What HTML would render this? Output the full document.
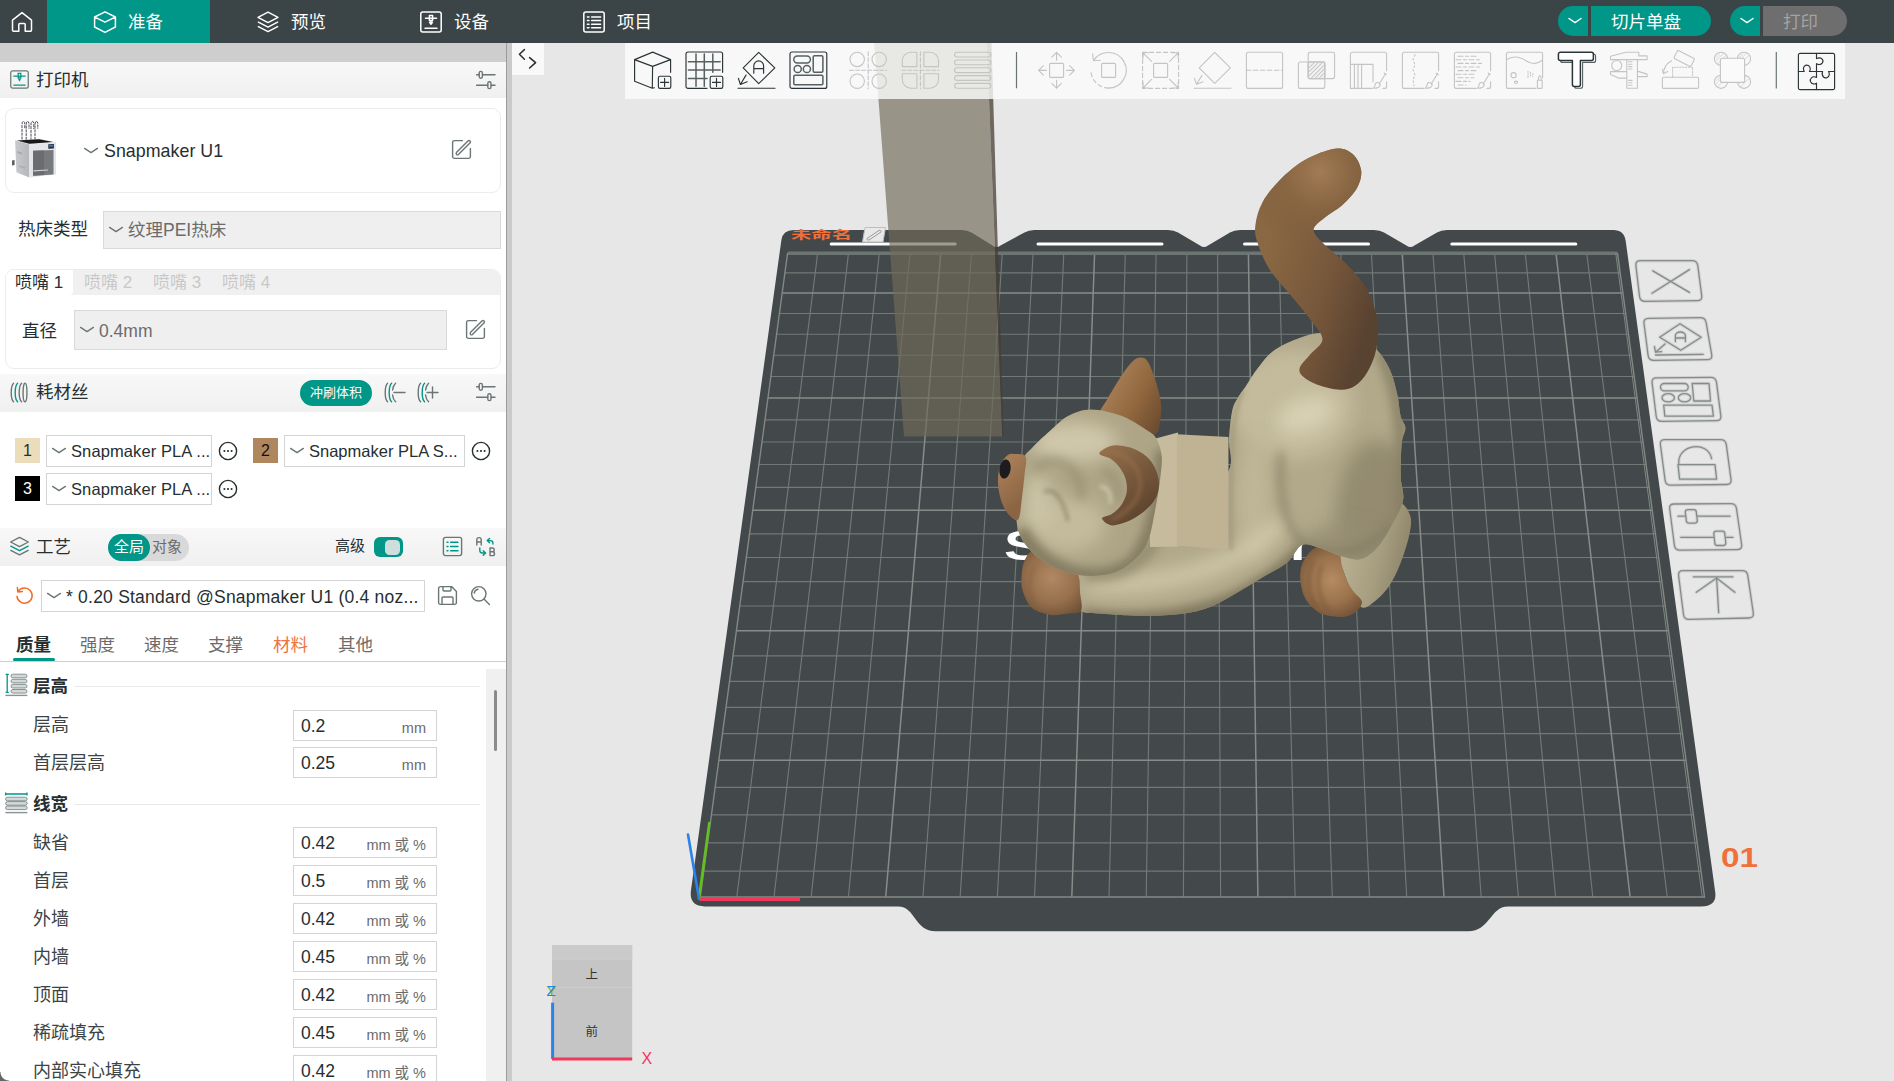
<!DOCTYPE html>
<html lang="zh-CN">
<head>
<meta charset="utf-8">
<title>Snapmaker Orca</title>
<style>
*{box-sizing:border-box}
html,body{margin:0;padding:0}
body{width:1894px;height:1081px;overflow:hidden;background:#e7e7e7;position:relative;
 font-family:"Liberation Sans","Noto Sans CJK SC",sans-serif;color:#262e30;font-size:17.5px}
.a{position:absolute}
.t{position:absolute;white-space:nowrap;line-height:20px;height:20px}
svg{position:absolute;overflow:visible}
.ic{fill:none;stroke:#6b7575;stroke-width:1.4;stroke-linecap:round;stroke-linejoin:round}
/* top bar */
#top{left:0;top:0;width:1894px;height:43px;background:#3b4446}
#top .tab{position:absolute;top:0;height:43px;width:163px}
#top .tab.on{background:#009688}
#top .tt{position:absolute;top:12px;left:81px;color:#fff;font-size:17.5px;line-height:20px;white-space:nowrap}
.wi{fill:none;stroke:#fff;stroke-width:1.5;stroke-linecap:round;stroke-linejoin:round}
/* left panel */
#left{left:0;top:0;width:506px;height:1081px;background:#fff;overflow:hidden}
.hdr{position:absolute;left:0;width:506px;background:linear-gradient(#f8f8f8,#f0f0f0)}
.card{position:absolute;border:1px solid #ececec;border-radius:9px;background:#fff}
.combo{position:absolute;background:#efefef;border:1px solid #d9d9d9}
.wcombo{position:absolute;background:#fff;border:1px solid #d4d4d4}
.gray{color:#6b6b6b}
.inp{position:absolute;left:293px;width:144px;height:31px;border:1px solid #d4d4d4;background:#fff}
.inp .v{position:absolute;left:7px;top:5px;line-height:20px;font-size:17.5px;color:#262e30}
.inp .u{position:absolute;right:10px;top:7px;line-height:20px;font-size:14.5px;color:#6b6b6b;white-space:nowrap}
.lbl{position:absolute;left:33px;line-height:20px;font-size:18px;color:#3c4446;white-space:nowrap}
.grp{position:absolute;left:33px;line-height:20px;font-size:17.5px;font-weight:bold;color:#262e30;white-space:nowrap}
</style>
</head>
<body>
<!-- ================= 3D VIEWPORT ================= -->
<svg style="left:0;top:0" width="1894" height="1081" viewBox="0 0 1894 1081">
<defs>
<radialGradient id="gHead" gradientUnits="userSpaceOnUse" cx="1082" cy="470" r="95" fx="1072" fy="452"><stop offset="0" stop-color="#d9d1b6"/><stop offset="0.45" stop-color="#cbc1a2"/><stop offset="0.8" stop-color="#aea486"/><stop offset="1" stop-color="#8f8669"/></radialGradient>
<radialGradient id="gBody" gradientUnits="userSpaceOnUse" cx="1318" cy="440" r="130" fx="1308" fy="418"><stop offset="0" stop-color="#dad2b6"/><stop offset="0.4" stop-color="#c8be9f"/><stop offset="0.8" stop-color="#a79e80"/><stop offset="1" stop-color="#8a8266"/></radialGradient>
<linearGradient id="gArm" gradientUnits="userSpaceOnUse" x1="1150" y1="540" x2="1170" y2="620"><stop offset="0" stop-color="#b8ae8e"/><stop offset="0.35" stop-color="#d5ccb0"/><stop offset="0.75" stop-color="#b5ab8b"/><stop offset="1" stop-color="#8e8568"/></linearGradient>
<linearGradient id="gLeg" gradientUnits="userSpaceOnUse" x1="1345" y1="560" x2="1410" y2="575"><stop offset="0" stop-color="#b7ad8f"/><stop offset="0.5" stop-color="#a69d80"/><stop offset="1" stop-color="#898166"/></linearGradient>
<linearGradient id="gTail" gradientUnits="userSpaceOnUse" x1="1262" y1="262" x2="1378" y2="300"><stop offset="0" stop-color="#8a6843"/><stop offset="0.55" stop-color="#77573b"/><stop offset="1" stop-color="#584230"/></linearGradient>
<radialGradient id="gTailTip" gradientUnits="userSpaceOnUse" cx="1320" cy="172" r="80"><stop offset="0" stop-color="#a17b53"/><stop offset="0.45" stop-color="#8a6743" stop-opacity="0.85"/><stop offset="1" stop-color="#7a5a3c" stop-opacity="0"/></radialGradient>
<linearGradient id="gEar" gradientUnits="userSpaceOnUse" x1="1105" y1="390" x2="1160" y2="420"><stop offset="0" stop-color="#a87e58"/><stop offset="0.5" stop-color="#93693f"/><stop offset="1" stop-color="#6f4e30"/></linearGradient>
<linearGradient id="gEar2" gradientUnits="userSpaceOnUse" x1="1105" y1="448" x2="1158" y2="512"><stop offset="0" stop-color="#93704c"/><stop offset="0.45" stop-color="#7a5a3d"/><stop offset="1" stop-color="#59412c"/></linearGradient>
<radialGradient id="gPaw" gradientUnits="userSpaceOnUse" cx="1052" cy="578" r="42"><stop offset="0" stop-color="#b08863"/><stop offset="0.6" stop-color="#966f4c"/><stop offset="1" stop-color="#6f5137"/></radialGradient>
<radialGradient id="gFoot" gradientUnits="userSpaceOnUse" cx="1332" cy="580" r="40"><stop offset="0" stop-color="#b48b62"/><stop offset="0.6" stop-color="#99714b"/><stop offset="1" stop-color="#735338"/></radialGradient>
<linearGradient id="gNose" gradientUnits="userSpaceOnUse" x1="1000" y1="470" x2="1026" y2="500"><stop offset="0" stop-color="#a67c56"/><stop offset="1" stop-color="#8a6443"/></linearGradient>
<filter id="b2" filterUnits="userSpaceOnUse" x="950" y="100" width="520" height="560"><feGaussianBlur stdDeviation="2.2"/></filter>
<filter id="b4" filterUnits="userSpaceOnUse" x="950" y="100" width="520" height="560"><feGaussianBlur stdDeviation="5"/></filter>
<filter id="b8" filterUnits="userSpaceOnUse" x="950" y="100" width="520" height="560"><feGaussianBlur stdDeviation="9"/></filter>
</defs>
<path d="M781.4 240 Q782.8 230 793.8 230 L961.5 230 Q967.5 230 971.5 232.5 L992.5 245.5 Q996.5 248.5 1000.5 245.5 L1024.5 232.5 Q1028.5 230 1034.5 230 L1168 230 Q1174 230 1178 232.5 L1200 245.5 Q1204 248.5 1208 245.5 L1230 232.5 Q1234 230 1240 230 L1374 230 Q1380 230 1384 232.5 L1406.4 245.5 Q1410.4 248.5 1414.4 245.5 L1437 232.5 Q1441 230 1447 230 L1613.2 230 Q1624.2 230 1625.7 241 L1715.2 892 Q1717.2 906.4 1701.2 906.4 L1508 906.4 C1490 906.4 1490 931.3 1468 931.3 L936 931.3 C914 931.3 916 906.4 898 906.4 L704.7 906.4 Q688.7 906.4 691 890 Z" fill="#43484a"/>
<path d="M784.9 272.9 H1620.2 M779.4 313.5 H1625.7 M776.6 334.2 H1628.5 M773.7 355.2 H1631.3 M770.9 376.5 H1634.2 M765 419.9 H1640 M762 442 H1643 M758.9 464.5 H1646.1 M755.8 487.3 H1649.1 M749.5 533.8 H1655.4 M746.3 557.5 H1658.6 M743.1 581.6 H1661.9 M739.7 606 H1665.2 M733 655.9 H1671.9 M729.5 681.4 H1675.4 M726 707.3 H1678.9 M722.4 733.6 H1682.4 M715.2 787.4 H1689.7 M711.4 814.9 H1693.4 M707.7 842.8 H1697.2 M703.8 871.1 H1701 M817.7 253 L736.8 897 M848.5 253 L774 897 M879.3 253 L811.2 897 M910 253 L848.4 897 M971.5 253 L922.9 897 M1002.3 253 L960.1 897 M1033.1 253 L997.3 897 M1063.8 253 L1034.5 897 M1125.3 253 L1109 897 M1156.1 253 L1146.2 897 M1186.9 253 L1183.4 897 M1217.6 253 L1220.6 897 M1279.1 253 L1295.1 897 M1309.9 253 L1332.3 897 M1340.7 253 L1369.5 897 M1371.4 253 L1406.7 897 M1432.9 253 L1481.2 897 M1463.7 253 L1518.4 897 M1494.5 253 L1555.6 897 M1525.2 253 L1592.8 897 M1586.7 253 L1667.3 897" fill="none" stroke="#727976" stroke-width="1.15"/>
<path d="M782.2 293.1 H1622.9 M767.9 398 H1637.1 M752.7 510.3 H1652.3 M736.4 630.8 H1668.5 M718.8 760.3 H1686 M940.8 253 L885.7 897 M1094.6 253 L1071.8 897 M1248.4 253 L1257.9 897 M1402.2 253 L1444 897 M1556 253 L1630.1 897" fill="none" stroke="#868d88" stroke-width="1.5"/>
<path d="M787.6 253.2 L1617.5 253.2" stroke="#6d7573" stroke-width="3.4" fill="none"/>
<path d="M787.6 253 L700.3 897 L1704.5 897 L1617.5 253" stroke="#828985" stroke-width="1.4" fill="none"/>
<path d="M1615.7 253 L1702.3 897" stroke="#7f8681" stroke-width="1" fill="none"/>
<rect x="829.7" y="242.6" width="127" height="3" rx="1.5" fill="#fff"/>
<rect x="1036.5" y="242.6" width="127" height="3" rx="1.5" fill="#fff"/>
<rect x="1243" y="242.6" width="127" height="3" rx="1.5" fill="#fff"/>
<rect x="1450.3" y="242.6" width="127" height="3" rx="1.5" fill="#fff"/>
<text x="791" y="240" font-size="17" font-weight="bold" fill="#f0703c" textLength="61" lengthAdjust="spacingAndGlyphs" transform="translate(0 82.800) scale(1 0.650)">未命名</text>
<g transform="translate(862 227)"><path d="M3 0.5 H23.500 L21 15 H0.500 Z" fill="#e9e9e9" stroke="#bdbdbd" stroke-width="1"/><path d="M5 11.500 L17 3.400 a1.500 1.200 0 0 1 2 1.600 L7 13 a1.500 1.200 0 0 1 -2 -1.500 Z" fill="none" stroke="#9a9a9a" stroke-width="1"/></g>
<text x="1004" y="559.5" font-size="43" font-weight="bold" fill="#fff" textLength="308" lengthAdjust="spacingAndGlyphs" font-family="Liberation Sans, sans-serif">Snapmaker</text>
<path d="M699.5 899.5 H800" stroke="#f0385a" stroke-width="3.2" fill="none"/>
<path d="M699 898.5 L709.3 823" stroke="#62c11c" stroke-width="2.6" stroke-linecap="round" fill="none"/>
<path d="M699 898.5 L688 834.500" stroke="#2a82ea" stroke-width="2.6" stroke-linecap="round" fill="none"/>
<text x="1721" y="867" font-size="27" font-weight="bold" fill="#f0703c" textLength="37" lengthAdjust="spacingAndGlyphs" font-family="Liberation Sans, sans-serif">01</text>
<path d="M874.2 43 L986.8 43 L1002.300 436.500 L904 436.500 Z" fill="rgba(112,106,88,0.665)"/>
<path d="M986.800 43 L991.500 43 L1003.600 436 L1002.300 436.500 Z" fill="rgba(70,62,52,0.750)"/>
<g id="cat">
<path d="M1338 550 C1339.2 544.2 1343 539.2 1350 535 C1357 530.8 1372 530.3 1380 525 C1388 519.7 1393 504.7 1398 503 C1403 501.3 1408.1 509.8 1410 515 C1411.9 520.2 1411.1 526 1409.5 534 C1407.9 542 1404.1 554.2 1400.6 563 C1397.1 571.8 1393.3 580.2 1388.5 587 C1383.7 593.8 1376.3 600.4 1371.7 603.7 C1367.1 607 1364.3 609 1361 607 C1357.7 605 1355 598.2 1352 592 C1349 585.8 1345.3 577 1343 570 C1340.7 563 1336.8 555.8 1338 550 Z" fill="url(#gLeg)"/>
<path d="M1314 548.4 C1309.8 550.9 1305.3 557.1 1303 562 C1300.7 566.9 1300 572.2 1300.2 578 C1300.4 583.8 1302.2 591.5 1304.3 596.5 C1306.4 601.5 1309.8 605 1313 608 C1316.2 611 1318.6 613 1323.6 614.5 C1328.6 616 1337.6 617.3 1342.8 617 C1348 616.7 1351.8 615 1355 612.5 C1358.2 610 1362.2 605.4 1362 602 C1361.8 598.6 1356.4 595.3 1354 592 C1351.6 588.7 1349.6 586.3 1347.6 582 C1345.6 577.7 1343.4 570.8 1342 566 C1340.6 561.2 1341.5 556.2 1339.2 553 C1336.9 549.8 1332.2 547.8 1328 547 C1323.8 546.2 1318.2 545.9 1314 548.4 Z" fill="url(#gFoot)"/>
<path d="M1313 562 C1306 578 1308 596 1318 608 M1322 566 C1316 580 1318 598 1328 610" fill="none" stroke="#6f4e33" stroke-width="2.400" opacity="0.600" filter="url(#b2)"/>
<clipPath id="cBody"><path d="M1245.4 387 C1242 392.1 1239.7 394.4 1237.5 398.5 C1235.3 402.6 1233.6 404.4 1232.2 411.3 C1230.8 418.2 1229.5 430.2 1229 440 C1228.5 449.8 1233.8 460 1229 470 C1224.2 480 1213.2 491.7 1200 500 C1186.8 508.3 1165 511.7 1150 520 C1135 528.3 1121.8 541.2 1110 550 C1098.2 558.8 1084.1 566 1079 573 C1073.9 580 1079.2 585.7 1079.5 592 C1079.8 598.3 1077.6 607.1 1081 610.7 C1084.4 614.3 1093.8 612.8 1100 613.5 C1106.2 614.2 1109.6 614.5 1118.3 614.9 C1127 615.3 1140.8 616 1152 615.7 C1163.2 615.4 1175.9 614.8 1185.8 613.2 C1195.7 611.7 1202.8 609.8 1211.2 606.4 C1219.7 603 1228 597.7 1236.5 592.9 C1245 588.1 1253.5 582.8 1261.9 577.7 C1270.4 572.6 1280.5 568 1287.2 562.5 C1293.9 557 1296.5 547.4 1302 545 C1307.5 542.6 1313.8 546.2 1320 548 C1326.2 549.8 1332.4 553.7 1339 555.6 C1345.6 557.5 1353.5 560.4 1359.7 559.2 C1366 558 1371.1 554.1 1376.5 548.4 C1381.9 542.7 1387.6 533 1392 525 C1396.4 517 1401.6 508.4 1403 500.3 C1404.4 492.2 1400.8 485.8 1400.6 476.2 C1400.4 466.6 1401 450.5 1401.8 442.5 C1402.6 434.5 1405.6 432.4 1405.4 428 C1405.2 423.6 1401.9 421.6 1400.6 416 C1399.2 410.4 1399.1 402.4 1397.3 394.7 C1395.5 387 1393.5 377.6 1390 370 C1386.5 362.4 1381.8 354.5 1376 349 C1370.2 343.5 1362.7 339.8 1355 337 C1347.3 334.2 1338.3 332.7 1330 332.5 C1321.7 332.3 1314.2 333.1 1305 336 C1295.8 338.9 1282.8 344.5 1275 349.8 C1267.2 355.1 1262.9 361.8 1258 368 C1253.1 374.2 1248.8 381.9 1245.4 387 Z"/></clipPath>
<g clip-path="url(#cBody)">
<rect x="1060" y="320" width="360" height="310" fill="#b2a98b"/>
<ellipse cx="1292" cy="405" rx="62" ry="55" fill="#c5bc9d" filter="url(#b8)" opacity="0.95"/>
<ellipse cx="1306" cy="415" rx="30" ry="17" fill="#dad2b6" filter="url(#b8)" opacity="0.95" transform="rotate(-20 1306 415)"/>
<ellipse cx="1254" cy="500" rx="17" ry="62" fill="#c1b89a" filter="url(#b8)" opacity="0.9"/>
<ellipse cx="1378" cy="515" rx="42" ry="75" fill="#8f876c" filter="url(#b8)" opacity="0.85"/>
<ellipse cx="1345" cy="545" rx="44" ry="20" fill="#958d72" filter="url(#b8)" opacity="0.85"/>
<path d="M1085 582 C1130 588 1190 580 1235 557 C1258 544 1272 533 1282 521" fill="none" stroke="#d3caac" stroke-width="17" filter="url(#b8)" opacity="0.95"/>
<path d="M1082 617 C1130 623 1190 621 1240 597 C1270 581 1290 567 1304 549" fill="none" stroke="#7d755b" stroke-width="17" filter="url(#b4)" opacity="0.9"/>
<path d="M1085 575 C1120 580 1150 560 1165 520" fill="none" stroke="#8e866a" stroke-width="14" filter="url(#b4)" opacity="0.7"/>
<path d="M1281 452 C1278 490 1283 520 1300 541 C1325 557 1365 559 1392 524" fill="none" stroke="#78715a" stroke-width="5" filter="url(#b4)" opacity="0.7"/>
<path d="M1380 350 C1402 390 1404 440 1402 520" fill="none" stroke="#847c62" stroke-width="14" filter="url(#b4)" opacity="0.75"/>
<path d="M1243 390 C1232 410 1230 440 1231 550" fill="none" stroke="#9a9176" stroke-width="5" filter="url(#b2)" opacity="0.5"/>
</g>
<path d="M1334.9 148.7 C1342.8 147.6 1347.9 150.1 1352.3 153.7 C1356.7 157.2 1360.3 164.4 1361.1 170 C1361.9 175.6 1360.4 181.6 1357.3 187.4 C1354.2 193.2 1347.8 199.9 1342.4 204.9 C1337 209.9 1329.7 213.2 1324.9 217.4 C1320.1 221.6 1313.6 225.3 1313.6 229.9 C1313.6 234.5 1319.3 239.1 1324.9 244.9 C1330.5 250.7 1340.3 257.4 1347.4 264.9 C1354.5 272.4 1362.3 280.6 1367.3 289.8 C1372.3 299 1375.8 309.8 1377.3 319.8 C1378.8 329.8 1377.8 341.1 1376.1 349.8 C1374.4 358.6 1370.8 366.3 1367.3 372.3 C1363.8 378.3 1359.4 383.1 1354.8 386 C1350.2 388.9 1346.1 389.9 1339.9 389.7 C1333.7 389.5 1323.7 387 1317.4 384.7 C1311.2 382.4 1305.3 378.9 1302.4 376 C1299.5 373.1 1298.7 370.8 1299.9 367.3 C1301.2 363.8 1306.2 359.4 1309.9 354.8 C1313.7 350.2 1322 345.2 1322.4 339.8 C1322.8 334.4 1317.4 329.4 1312.4 322.3 C1307.4 315.2 1299.5 306 1292.4 297.3 C1285.3 288.6 1275.7 279 1269.9 269.9 C1264.1 260.8 1259.8 249.9 1257.4 242.4 C1255 234.9 1254.6 231.6 1255.4 224.9 C1256.2 218.2 1258.3 209.9 1262.4 202.4 C1266.5 194.9 1272.8 187.1 1279.9 180 C1287 172.9 1295.7 165.2 1304.9 160 C1314.1 154.8 1327 149.8 1334.9 148.7 Z" fill="url(#gTail)"/>
<path d="M1334.9 148.7 C1342.8 147.6 1347.9 150.1 1352.3 153.7 C1356.7 157.2 1360.3 164.4 1361.1 170 C1361.9 175.6 1360.4 181.6 1357.3 187.4 C1354.2 193.2 1347.8 199.9 1342.4 204.9 C1337 209.9 1329.7 213.2 1324.9 217.4 C1320.1 221.6 1313.6 225.3 1313.6 229.9 C1313.6 234.5 1319.3 239.1 1324.9 244.9 C1330.5 250.7 1340.3 257.4 1347.4 264.9 C1354.5 272.4 1362.3 280.6 1367.3 289.8 C1372.3 299 1375.8 309.8 1377.3 319.8 C1378.8 329.8 1377.8 341.1 1376.1 349.8 C1374.4 358.6 1370.8 366.3 1367.3 372.3 C1363.8 378.3 1359.4 383.1 1354.8 386 C1350.2 388.9 1346.1 389.9 1339.9 389.7 C1333.7 389.5 1323.7 387 1317.4 384.7 C1311.2 382.4 1305.3 378.9 1302.4 376 C1299.5 373.1 1298.7 370.8 1299.9 367.3 C1301.2 363.8 1306.2 359.4 1309.9 354.8 C1313.7 350.2 1322 345.2 1322.4 339.8 C1322.8 334.4 1317.4 329.4 1312.4 322.3 C1307.4 315.2 1299.5 306 1292.4 297.3 C1285.3 288.6 1275.7 279 1269.9 269.9 C1264.1 260.8 1259.8 249.9 1257.4 242.4 C1255 234.9 1254.6 231.6 1255.4 224.9 C1256.2 218.2 1258.3 209.9 1262.4 202.4 C1266.5 194.9 1272.8 187.1 1279.9 180 C1287 172.9 1295.7 165.2 1304.9 160 C1314.1 154.8 1327 149.8 1334.9 148.7 Z" fill="url(#gTailTip)"/>
<path d="M1150 440 L1178 432.500 L1178 546.500 L1150 547 Z" fill="#c6bc9d"/>
<path d="M1177 434.300 L1228.500 437 L1228.200 549.800 L1176.600 545.600 Z" fill="#bfb393"/>
<path d="M1032.1 550.7 C1027.8 553 1025.8 557.6 1024 562 C1022.2 566.4 1021.7 572.1 1021.5 577 C1021.3 581.9 1021 586 1022.8 591.2 C1024.6 596.4 1027.4 604.2 1032.1 608.1 C1036.8 612 1044.7 614 1050.7 614.9 C1056.7 615.8 1062.9 614.2 1068 613.5 C1073.1 612.8 1079.1 614.3 1081.1 610.7 C1083.1 607.1 1080.4 597.8 1080 592 C1079.6 586.2 1080.3 581.3 1078.6 576 C1076.9 570.7 1074.8 564.7 1070 560 C1065.2 555.3 1056.3 549.5 1050 548 C1043.7 546.5 1036.4 548.4 1032.1 550.7 Z" fill="url(#gPaw)"/>
<path d="M1036 566 C1028 576 1028 590 1034 600" fill="none" stroke="#77553a" stroke-width="2" opacity="0.5" filter="url(#b2)"/>
<path d="M1141 357.5 C1143.5 357.7 1145.5 357.9 1148 362 C1150.5 366.1 1153.8 375 1156 382 C1158.2 389 1160.3 397.3 1161 404 C1161.7 410.7 1161 416.9 1160 422 C1159 427.1 1159 432.6 1154.8 434.3 C1150.6 436 1142.1 433.7 1135 432 C1127.9 430.3 1118 426.8 1112 424 C1106 421.2 1100 419.3 1099.3 415 C1098.6 410.7 1104.2 404.7 1108 398 C1111.8 391.3 1117.8 381.2 1122 375 C1126.2 368.8 1129.8 363.9 1133 361 C1136.2 358.1 1138.5 357.3 1141 357.5 Z" fill="url(#gEar)"/>
<clipPath id="cHead"><path d="M1091 409.4 C1082 409.4 1074.9 412.3 1068 416 C1061.1 419.7 1055.4 426.3 1049.4 431.6 C1043.4 436.9 1036.2 443.6 1032 448 C1027.8 452.4 1025.7 452.7 1024 458 C1022.3 463.3 1023 472.2 1022 480 C1021 487.8 1018.9 497.7 1018 505 C1017.1 512.3 1015.9 517.5 1016.9 523.7 C1017.9 529.9 1019.5 536 1023.7 542.2 C1027.9 548.4 1034.9 555.7 1042.2 560.8 C1049.5 565.9 1059.1 570.1 1067.6 572.6 C1076 575.1 1084.5 576.3 1092.9 576 C1101.4 575.7 1110.7 574.4 1118.3 571 C1125.9 567.6 1133.4 561.1 1138.5 555.8 C1143.6 550.4 1145.9 546.8 1148.7 538.9 C1151.5 531 1153.5 518.2 1155.4 508.4 C1157.3 498.6 1159 488.6 1160 480 C1161 471.4 1162.2 463.2 1161.7 456.5 C1161.2 449.8 1159.1 444.1 1157 440 C1154.9 435.9 1154.8 435.6 1149 431.6 C1143.2 427.6 1131.7 419.7 1122 416 C1112.3 412.3 1100 409.4 1091 409.4 Z"/></clipPath>
<g clip-path="url(#cHead)">
<rect x="1000" y="400" width="170" height="185" fill="#aea587"/>
<ellipse cx="1074" cy="442" rx="44" ry="20" fill="#d0c8ab" filter="url(#b8)"/>
<ellipse cx="1066" cy="524" rx="40" ry="28" fill="#c4bb9d" filter="url(#b8)"/>
<ellipse cx="1038" cy="500" rx="14" ry="28" fill="#cfc7aa" filter="url(#b8)" opacity="0.9"/>
<path d="M1036 470 C1046 458 1062 458 1074 472 C1080 480 1082 492 1080 500" fill="none" stroke="#8f876b" stroke-width="9" opacity="0.55" filter="url(#b4)"/>
<path d="M1044 492 C1050 489 1056 491 1062 503 C1066 511 1067 517 1068 521" fill="none" stroke="#746d54" stroke-width="2.400" opacity="0.700" filter="url(#b2)"/>
<path d="M1102 470 C1114 474 1122 486 1118 500" fill="none" stroke="#8b8367" stroke-width="6" opacity="0.600" filter="url(#b4)"/>
<path d="M1100 486 C1108 488 1112 494 1110 504" fill="none" stroke="#e0d9c0" stroke-width="3" opacity="0.700" filter="url(#b2)"/>
<path d="M1020 530 C1040 570 1090 590 1130 566 C1152 548 1162 500 1164 450" fill="none" stroke="#7f775d" stroke-width="17" opacity="0.850" filter="url(#b4)"/>
</g>
<path d="M1007.7 455 C1010.4 453 1013 453.7 1016 454 C1019 454.3 1024.4 453.5 1025.8 457 C1027.2 460.5 1025.1 468.3 1024.5 475 C1023.9 481.7 1023 489.7 1022 497 C1021 504.3 1020.5 515.8 1018.5 519 C1016.5 522.2 1012.8 518.7 1010 516 C1007.2 513.3 1004 508.3 1002 503 C1000 497.7 998.3 490.2 998 484 C997.7 477.8 998.4 470.8 1000 466 C1001.6 461.2 1005 457 1007.7 455 Z" fill="url(#gNose)"/>
<ellipse cx="1005" cy="469" rx="5.600" ry="9.600" fill="#1c1c1e" transform="rotate(8 1005 469)"/>
<path d="M1099.3 453.8 C1098.8 451.8 1104.8 448.4 1108 447 C1111.2 445.6 1114.5 445.1 1118.7 445.4 C1122.9 445.6 1128.4 446.6 1133 448.5 C1137.6 450.4 1142.8 453.2 1146.5 456.5 C1150.2 459.8 1152.9 463.4 1155 468 C1157.1 472.6 1159.2 478.8 1159 484.3 C1158.8 489.8 1157.9 495.4 1154 501 C1150.1 506.6 1142.2 513.5 1135.4 517.6 C1128.6 521.7 1118.8 525.2 1113.2 525.4 C1107.6 525.5 1102.2 520.4 1102 518.5 C1101.8 516.6 1108.8 516.2 1112 514 C1115.2 511.8 1118.6 509 1121 505.5 C1123.4 502 1125.7 497.3 1126.5 493 C1127.3 488.7 1126.9 483.7 1125.8 479.5 C1124.7 475.3 1122.5 471.4 1120 468 C1117.5 464.6 1114.5 461.4 1111 459 C1107.5 456.6 1099.8 455.8 1099.3 453.8 Z" fill="url(#gEar2)"/>
<path d="M1104 452 C1120 450 1136 460 1140 480 C1142 495 1132 510 1112 520" fill="none" stroke="#9c7550" stroke-width="3" opacity="0.600" filter="url(#b2)"/>
</g>
</svg>
<svg style="left:0;top:0" width="1894" height="1081" viewBox="0 0 1894 1081">
<style>.ph{fill:none;stroke:#d3d3d3;stroke-width:3.400;stroke-linejoin:round;stroke-linecap:round}.pl{fill:none;stroke:#858b8b;stroke-width:1.300;stroke-linejoin:round;stroke-linecap:round}</style>
<path class="ph" d="M1635.9 265.7 Q1635.3 260.7 1640.3 260.7 L1692.1 260.7 Q1697.1 260.7 1697.8 265.7 L1701.7 295.6 Q1702.4 300.6 1697.4 300.7 L1645.1 301.3 Q1640.1 301.4 1639.5 296.4 Z"/>
<path class="pl" d="M1635.9 265.7 Q1635.3 260.7 1640.3 260.7 L1692.1 260.7 Q1697.1 260.7 1697.8 265.7 L1701.7 295.6 Q1702.4 300.6 1697.4 300.7 L1645.1 301.3 Q1640.1 301.4 1639.5 296.4 Z"/>
<path class="ph" d="M1652.800 270.900 L1689.400 292.400 M1689.400 269.600 L1652 293.200"/>
<path class="pl" d="M1652.800 270.900 L1689.400 292.400 M1689.400 269.600 L1652 293.200"/>
<path class="ph" d="M1644.0 323.5 Q1643.4 318.5 1648.4 318.4 L1700.2 317.7 Q1705.2 317.6 1706.1 322.5 L1711.7 354.6 Q1712.6 359.5 1707.6 359.6 L1653.7 360.3 Q1648.7 360.4 1648.1 355.4 Z"/>
<path class="pl" d="M1644.0 323.5 Q1643.4 318.5 1648.4 318.4 L1700.2 317.7 Q1705.2 317.6 1706.1 322.5 L1711.7 354.6 Q1712.6 359.5 1707.6 359.6 L1653.7 360.3 Q1648.7 360.4 1648.1 355.4 Z"/>
<path class="ph" d="M1680 323.700 L1701.200 337.200 L1680.800 350.200 L1659.700 337.200 Z M1655.600 355 L1703.200 354.300 M1665 344 L1655.600 352.200 M1654.400 346.600 L1655.600 352.200 L1661.600 351.600 M1675.400 341.600 V335.600 a5 3.600 0 0 1 10 0 V341.600 M1675.400 338 H1685.400"/>
<path class="pl" d="M1680 323.700 L1701.200 337.200 L1680.800 350.200 L1659.700 337.200 Z M1655.600 355 L1703.200 354.300 M1665 344 L1655.600 352.200 M1654.400 346.600 L1655.600 352.200 L1661.600 351.600 M1675.400 341.600 V335.600 a5 3.600 0 0 1 10 0 V341.600 M1675.400 338 H1685.400"/>
<path class="ph" d="M1652.1 382.9 Q1651.5 377.9 1656.5 377.9 L1710.8 377.4 Q1715.8 377.4 1716.5 382.4 L1720.8 415.6 Q1721.5 420.6 1716.5 420.7 L1661.8 421.3 Q1656.8 421.4 1656.2 416.4 Z"/>
<path class="pl" d="M1652.1 382.9 Q1651.5 377.9 1656.5 377.9 L1710.8 377.4 Q1715.8 377.4 1716.5 382.4 L1720.8 415.6 Q1721.5 420.6 1716.5 420.7 L1661.8 421.3 Q1656.8 421.4 1656.2 416.4 Z"/>
<path class="ph" d="M1664.200 383.500 H1684.500 a3.700 3.700 0 0 1 0 7.400 H1664.200 a3.700 3.700 0 0 1 0 -7.400 Z M1692.200 383.500 H1709 L1710.500 401 H1693.800 Z M1663.700 405.100 H1712 L1713.400 416.100 H1664.800 Z"/>
<path class="pl" d="M1664.200 383.500 H1684.500 a3.700 3.700 0 0 1 0 7.400 H1664.200 a3.700 3.700 0 0 1 0 -7.400 Z M1692.200 383.500 H1709 L1710.500 401 H1693.800 Z M1663.700 405.100 H1712 L1713.400 416.100 H1664.800 Z"/>
<path class="ph" d="M1674.400 397.800 a6.200 4.100 0 1 0 -12.400 0 a6.200 4.100 0 1 0 12.400 0 Z M1690.700 397.800 a6.200 4.100 0 1 0 -12.400 0 a6.200 4.100 0 1 0 12.400 0 Z"/>
<path class="pl" d="M1674.400 397.800 a6.200 4.100 0 1 0 -12.400 0 a6.200 4.100 0 1 0 12.400 0 Z M1690.700 397.800 a6.200 4.100 0 1 0 -12.400 0 a6.200 4.100 0 1 0 12.400 0 Z"/>
<path class="ph" d="M1660.4 444.7 Q1659.7 439.7 1664.7 439.7 L1720.6 439.7 Q1725.6 439.7 1726.3 444.7 L1731.0 479.4 Q1731.7 484.4 1726.7 484.5 L1670.8 485.2 Q1665.8 485.3 1665.1 480.3 Z"/>
<path class="pl" d="M1660.4 444.7 Q1659.7 439.7 1664.7 439.7 L1720.6 439.7 Q1725.6 439.7 1726.3 444.7 L1731.0 479.4 Q1731.7 484.4 1726.7 484.5 L1670.8 485.2 Q1665.8 485.3 1665.1 480.3 Z"/>
<path class="ph" d="M1678 464.600 H1715 L1716.600 479.200 H1679.600 Z M1678.800 464 C1677 444 1708 440 1711.600 458.600"/>
<path class="pl" d="M1678 464.600 H1715 L1716.600 479.200 H1679.600 Z M1678.800 464 C1677 444 1708 440 1711.600 458.600"/>
<path class="ph" d="M1669.7 509.0 Q1669.0 504.0 1674.0 504.0 L1730.8 503.6 Q1735.8 503.6 1736.5 508.6 L1741.6 544.5 Q1742.3 549.5 1737.3 549.6 L1680.1 550.2 Q1675.1 550.3 1674.4 545.3 Z"/>
<path class="pl" d="M1669.7 509.0 Q1669.0 504.0 1674.0 504.0 L1730.8 503.6 Q1735.8 503.6 1736.5 508.6 L1741.6 544.5 Q1742.3 549.5 1737.3 549.6 L1680.1 550.2 Q1675.1 550.3 1674.4 545.3 Z"/>
<path class="ph" d="M1678 516.200 H1685.300 M1697.500 516.200 H1730 M1680.800 537.300 H1713.800 M1726 537.300 H1732.900 M1687.800 509.700 h6 a2.500 2.500 0 0 1 2.500 2.500 l1 8.400 a2.500 2.500 0 0 1 -2.500 2.500 h-6 a2.500 2.500 0 0 1 -2.500 -2.500 l-1 -8.400 a2.500 2.500 0 0 1 2.500 -2.500 Z M1716.300 531.200 h6 a2.500 2.500 0 0 1 2.500 2.500 l1 9.300 a2.500 2.500 0 0 1 -2.500 2.500 h-6 a2.500 2.500 0 0 1 -2.500 -2.500 l-1 -9.300 a2.500 2.500 0 0 1 2.500 -2.500 Z"/>
<path class="pl" d="M1678 516.200 H1685.300 M1697.500 516.200 H1730 M1680.800 537.300 H1713.800 M1726 537.300 H1732.900 M1687.800 509.700 h6 a2.500 2.500 0 0 1 2.500 2.500 l1 8.400 a2.500 2.500 0 0 1 -2.500 2.500 h-6 a2.500 2.500 0 0 1 -2.500 -2.500 l-1 -8.400 a2.500 2.500 0 0 1 2.500 -2.500 Z M1716.300 531.200 h6 a2.500 2.500 0 0 1 2.500 2.500 l1 9.300 a2.500 2.500 0 0 1 -2.500 2.500 h-6 a2.500 2.500 0 0 1 -2.500 -2.500 l-1 -9.300 a2.500 2.500 0 0 1 2.500 -2.500 Z"/>
<path class="ph" d="M1678.6 575.7 Q1678.0 570.7 1683.0 570.7 L1742.1 570.7 Q1747.1 570.7 1747.8 575.6 L1753.3 613.0 Q1754.0 617.9 1749.0 618.0 L1689.1 619.4 Q1684.1 619.5 1683.5 614.5 Z"/>
<path class="pl" d="M1678.6 575.7 Q1678.0 570.7 1683.0 570.7 L1742.1 570.7 Q1747.1 570.7 1747.8 575.6 L1753.3 613.0 Q1754.0 617.9 1749.0 618.0 L1689.1 619.4 Q1684.1 619.5 1683.5 614.5 Z"/>
<path class="ph" d="M1693.400 576.800 H1732.900 M1716.600 578 L1718.700 612.600 M1696.300 592.300 L1716.600 578 L1734.900 592.300"/>
<path class="pl" d="M1693.400 576.800 H1732.900 M1716.600 578 L1718.700 612.600 M1696.300 592.300 L1716.600 578 L1734.900 592.300"/>
<rect x="552" y="945" width="80.200" height="113.400" fill="#c5c5c5"/>
<rect x="552" y="945" width="80.200" height="14.600" fill="#cacaca"/>
<path d="M552 959.600 H632.200 M552 987.400 H632.200" stroke="#cdcdcd" stroke-width="1"/>
<text x="591.800" y="979" font-size="12.500" fill="#333" text-anchor="middle">上</text>
<text x="591.800" y="1035.500" font-size="12.500" fill="#333" text-anchor="middle">前</text>
<path d="M552.600 1002.700 V1059" stroke="#2a82ea" stroke-width="3"/>
<path d="M552 1059 H632.200" stroke="#f0385a" stroke-width="3"/>
<text x="546.500" y="996" font-size="15" fill="#62c11c" font-family="Liberation Sans, sans-serif">Y</text>
<text x="546.500" y="996" font-size="15" fill="#2a82ea" font-family="Liberation Sans, sans-serif">Z</text>
<text x="641.500" y="1064" font-size="16" fill="#f0385a" font-family="Liberation Sans, sans-serif">X</text>
</svg>
<!-- ================= VIEWPORT OVERLAYS ================= -->
<div class="a" style="left:512px;top:43px;width:32px;height:32px;background:#f9f9f9"></div>
<svg style="left:517px;top:47.500px" width="22" height="22" viewBox="0 0 22 22"><path d="M7.400 1.600 L2.400 6.200 L7.400 11.200 M12.600 9.600 L18.600 14.600 L12.600 20" fill="none" stroke="#262e30" stroke-width="1.500" stroke-linecap="round" stroke-linejoin="round"/></svg>
<div class="a" style="left:625px;top:43px;width:1220px;height:56px;background:rgba(252,252,252,0.8)"></div>
<svg style="left:0;top:0" width="1894" height="110" viewBox="0 0 1894 110">
<style>.d{fill:none;stroke:#2b3436;stroke-width:1.15;stroke-linecap:round;stroke-linejoin:round}.g{fill:none;stroke:#c4c4c4;stroke-width:1.100;stroke-linecap:round;stroke-linejoin:round}.m{fill:none;stroke:#566062;stroke-width:1.500;stroke-linecap:round;stroke-linejoin:round}</style>
<g transform="translate(634 51.8)"><path class="d" d="M18.700 0.300 L0.600 7.800 L18.600 14.600 L36.600 7.800 Z M0.600 7.800 V29.400 L18.300 36.400 L20.400 36 M18.600 14.600 L18.300 36.400 M36.600 7.800 V20.500"/><rect class="d" x="24.400" y="24.400" width="12.400" height="12.200" rx="1.600"/><path class="d" d="M30.600 26.600 V34.600 M26.600 30.600 H34.600"/></g>
<g transform="translate(686 51.8)"><path class="d" d="M21 36.600 H2 a2 2 0 0 1 -2 -2 V2.200 a2 2 0 0 1 2 -2 H34.600 a2 2 0 0 1 2 2 V20.500"/><path class="m" d="M10 2.200 V34.400 M18.300 2.200 V34.400 M26.800 2.200 V20.500 M2.400 10 H34.200 M2.400 18.300 H34.200 M2.400 26.800 H21"/><rect class="d" x="24.200" y="24.400" width="12.600" height="12.200" rx="1.600"/><path class="d" d="M30.500 26.600 V34.600 M26.500 30.600 H34.500"/></g>
<g transform="translate(738 51.8)"><path class="d" d="M20.700 0.600 L36.800 16.100 L20.700 31.900 L5.200 16.100 Z M0 36.400 H37 M8 23.300 L2.400 32.700 M0.400 26.600 L2.400 32.700 L9.100 29.900"/><path class="d" d="M15.800 21.400 V14 a4.900 4.900 0 0 1 9.800 0 V21.400 M15.800 16.800 H25.600"/></g>
<g transform="translate(790 51.8)"><rect class="d" x="0" y="0.200" width="36.800" height="36.400" rx="2"/><rect class="m" x="3.800" y="4.200" width="16.600" height="6.900" rx="3.450"/><rect class="m" x="23.200" y="3.900" width="9.700" height="16.600" rx="1.200"/><circle class="m" cx="7.700" cy="17.200" r="3.600"/><circle class="m" cx="16.900" cy="17.200" r="3.600"/><rect class="m" x="3.800" y="23.500" width="29.100" height="9.500" rx="1.200"/></g>
<g transform="translate(849.6 51.8)"><circle class="g" cx="7.600" cy="7.600" r="7.200"/><circle class="g" cx="29.600" cy="7.600" r="7.200"/><circle class="g" cx="7.600" cy="29.400" r="7.200"/><circle class="g" cx="29.600" cy="29.400" r="7.200"/><path class="g" stroke-dasharray="4 2" d="M18.600 0 V37 M0 18.500 H37"/></g>
<g transform="translate(901.9 51.8)"><path class="g" d="M15 0.400 V14.800 H0.400 V9 A8.600 8.600 0 0 1 9 0.400 Z M22 0.400 H28 A8.600 8.600 0 0 1 36.600 9 V14.800 H22 Z M0.400 22 H15 V36.400 H9 A8.600 8.600 0 0 1 0.400 27.800 Z M22 22 H36.600 V27.800 A8.600 8.600 0 0 1 28 36.400 H22 Z"/><path class="g" stroke-dasharray="4 2" d="M18.500 0 V37 M0 18.500 H37"/></g>
<g transform="translate(954.2 51.8)"><rect class="g" x="0.400" y="0.4" width="36.200" height="4.800" rx="2.400"/><rect class="g" x="0.400" y="8.2" width="36.200" height="4.800" rx="2.400"/><rect class="g" x="0.400" y="16" width="36.200" height="4.800" rx="2.400"/><rect class="g" x="0.400" y="23.8" width="36.200" height="4.800" rx="2.400"/><rect class="g" x="0.400" y="31.6" width="36.200" height="4.800" rx="2.400"/></g>
<path d="M1016.500 52 V88.300" stroke="#6b7575" stroke-width="1.200"/>
<g transform="translate(1038 51.8)"><rect class="g" x="11.600" y="11.600" width="14" height="14" rx="1"/><path class="g" d="M18.600 8.400 V0.600 M13.800 5.400 L18.600 0.600 L23.400 5.400 M18.600 28.600 V36.400 M13.800 31.600 L18.600 36.400 L23.400 31.600 M8.400 18.600 H0.600 M5.400 13.800 L0.600 18.600 L5.400 23.400 M28.600 18.600 H36.400 M31.600 13.800 L36.400 18.600 L31.600 23.400"/></g>
<g transform="translate(1090 51.8)"><rect class="g" x="11.600" y="11.600" width="14" height="14" rx="1"/><path class="g" d="M3.600 8.600 A17.800 17.800 0 1 1 18.500 36.300"/><path class="g" stroke-dasharray="4 3" d="M18.500 36.300 A17.800 17.800 0 0 1 1 20"/><path class="g" d="M2.600 2 L3.400 9 L10.400 8.400"/></g>
<g transform="translate(1142 51.8)"><rect class="g" x="11.600" y="11.600" width="14" height="14" rx="1"/><rect class="g" x="0.600" y="0.600" width="36" height="36" stroke-dasharray="4 3"/><path class="g" d="M9.600 9.600 L1 1 M1 6.600 V1 H6.600 M27.600 9.600 L36.200 1 M30.600 1 H36.200 V6.600 M9.600 27.600 L1 36.200 M1 30.600 V36.200 H6.600 M27.600 27.600 L36.200 36.200 M36.200 30.600 V36.200 H30.600"/></g>
<g transform="translate(1194 51.8)"><path class="g" d="M20.700 0.600 L36.400 16.100 L20.700 31.600 L5.200 16.100 Z M0 36.400 H37 M8 23.600 L2.400 32.400 M0.400 26.400 L2.400 32.400 L9 30"/></g>
<g transform="translate(1246 51.8)"><rect class="g" x="0.400" y="0.400" width="36.200" height="36.200" rx="2"/><path class="g" stroke-dasharray="4.500 2.500" d="M0.400 18.500 H36.600"/></g>
<g transform="translate(1298 51.8)"><rect class="g" x="10.200" y="0.400" width="26.400" height="26.400" rx="2"/><rect class="g" x="0.400" y="10.200" width="26.400" height="26.400" rx="2"/><rect x="10.200" y="10.200" width="16.600" height="16.600" rx="1.500" fill="#f0f0f0" stroke="#c4c4c4" stroke-width="1.400"/><path d="M11 16 L16 11 M11 20 L20 11 M11 24 L24 11 M13.500 26 L26 13.500 M17.500 26 L26 17.500 M21.500 26 L26 21.500" stroke="#b4b4b4" stroke-width="0.900"/></g>
<g transform="translate(1350 51.8)"><path class="g" d="M22 36.600 H0.400 V2.400 a2 2 0 0 1 2 -2 H34.600 a2 2 0 0 1 2 2 V19 M0.400 12.600 H23 V30 M4.400 12.600 V36.600 M8 12.600 V36.600 M11.600 12.600 V36.600 M36.600 30 V34.600 a2 2 0 0 1 -2 2 H33"/><path class="g" d="M35.600 22 C33 26 30.500 30 29.400 32.400 M34.200 21.400 L36.400 22.800 M26.200 31 C28 30 30.500 31.500 30.200 33.600 C29.600 36 25 36.800 23.200 36.400 C25.400 35 24.600 32 26.200 31 Z" /></g>
<g transform="translate(1402 51.8)"><path class="g" d="M22 36.600 H2.400 a2 2 0 0 1 -2 -2 V2.400 a2 2 0 0 1 2 -2 H34.600 a2 2 0 0 1 2 2 V19 M36.600 30 V34.600 a2 2 0 0 1 -2 2 H33"/><path class="g" stroke-dasharray="1.500 2.500" stroke-width="1.800" d="M13 3 L11 8 L13 13 L11 18 L13 23 L11 28 L12 34"/><path class="g" d="M35.600 22 C33 26 30.500 30 29.400 32.400 M34.200 21.400 L36.400 22.800 M26.200 31 C28 30 30.500 31.500 30.200 33.600 C29.600 36 25 36.800 23.200 36.400 C25.400 35 24.600 32 26.200 31 Z" /></g>
<g transform="translate(1454 51.8)"><path class="g" d="M22 36.600 H2.400 a2 2 0 0 1 -2 -2 V2.400 a2 2 0 0 1 2 -2 H34.600 a2 2 0 0 1 2 2 V19 M36.600 30 V34.600 a2 2 0 0 1 -2 2 H33"/><path class="g" stroke-width="1.300" stroke-dasharray="5 2.500 3 2.500" d="M4 4.400 H22 M2 8 H26 M4 11.600 H30 M2 15.200 H26 M4 18.800 H23 M2 22.400 H20 M4 26 H20 M2 29.600 H16 M4 33.200 H12"/><path class="g" d="M35.600 22 C33 26 30.500 30 29.400 32.400 M34.200 21.400 L36.400 22.800 M26.200 31 C28 30 30.500 31.500 30.200 33.600 C29.600 36 25 36.800 23.200 36.400 C25.400 35 24.600 32 26.200 31 Z" /></g>
<g transform="translate(1506 51.8)"><path class="g" d="M30 36.600 H2.400 a2 2 0 0 1 -2 -2 V2.400 a2 2 0 0 1 2 -2 H34.600 a2 2 0 0 1 2 2 V26 M0.400 8 C8 3 14 5 20 9 C26 13 32 12 36.600 8"/><circle class="g" cx="7.600" cy="23.400" r="2.600"/><ellipse class="g" cx="10" cy="30.400" rx="1.600" ry="1.100"/><path class="g" stroke-dasharray="1 1.600" d="M22 19.400 V27 M24.400 20.600 V25.800 M26.800 21.800 V24.600"/><path class="g" d="M31.400 28.400 h4.800 v7.200 a1 1 0 0 1 -1 1 h-2.800 a1 1 0 0 1 -1 -1 Z M32.400 28.400 C32.400 25 33 24 33.800 24 C34.600 24 35.200 25 35.200 28.400"/></g>
<g transform="translate(1558 51.8)"><path d="M4.6 2.2 h31 a2 2 0 0 1 2 2 v4.400 a2 2 0 0 1 -2 2 h-11 v23.800 a2 2 0 0 1 -2 2 h-4 a2 2 0 0 1 -2 -2 v-23.800 h-12 a2 2 0 0 1 -2 -2 v-4.400 a2 2 0 0 1 2 -2 Z" fill="#fff" stroke="#566062" stroke-width="1.100" stroke-linejoin="round"/><path d="M2.4 0.4 h31 a2 2 0 0 1 2 2 v4.400 a2 2 0 0 1 -2 2 h-11 v23.800 a2 2 0 0 1 -2 2 h-4 a2 2 0 0 1 -2 -2 v-23.800 h-12 a2 2 0 0 1 -2 -2 v-4.400 a2 2 0 0 1 2 -2 Z" fill="#fff" stroke="#2b3436" stroke-width="1.500" stroke-linejoin="round"/></g>
<g transform="translate(1610 51.8)"><path class="g" d="M0.500 4.500 L15.900 0.400 H28.800 V4.100 L37.100 4.100 V7.800 H0.500 Z M16.800 7.800 V36.500 M27.400 7.800 V36.500 M16.800 36.500 H27.400 M0.500 19.800 H16.800 M0.500 19.800 V22.600 L8.500 26.300 H16.800 M27.400 19.300 L37.100 22.300 V24.800 H27.400"/><circle class="g" cx="6.700" cy="13.700" r="5"/><path class="g" stroke-width="0.800" d="M18.600 10 h3.400 M18.600 12.400 h3.400 M18.600 14.800 h3.400 M18.600 17.200 h3.400 M18.600 28.600 h3.400 M18.600 31 h3.400 M18.600 33.400 h3.400"/></g>
<g transform="translate(1662 51.8)"><rect class="g" x="0.400" y="25.400" width="36.200" height="11.200" rx="1.200"/><rect class="g" x="13" y="2" width="19" height="9" rx="1.200" transform="rotate(27 22 6)"/><path class="g" stroke-dasharray="1.200 1.600" d="M10.600 25 V15.400 H30.600 V25"/><path class="g" d="M9.600 9 C4 12 1.600 17 1.400 22 M0.400 17.400 L1.400 22 L5.600 19.600"/></g>
<g transform="translate(1714 51.8)"><circle class="g" cx="7" cy="7" r="6.600"/><circle class="g" cx="30" cy="7" r="6.600"/><circle class="g" cx="7" cy="30" r="6.600"/><circle class="g" cx="30" cy="30" r="6.600"/><path stroke="#cfcfcf" stroke-width="0.800" d="M2 6 L6 2 M1 10 L10 1 M3 12.600 L12.600 3 M25 6 L29 2 M24 10 L33 1 M26 12.600 L35.600 3 M2 29 L6 25 M1 33 L10 24 M3 35.600 L12.600 26 M25 29 L29 25 M24 33 L33 24 M26 35.600 L35.600 26"/><rect x="6.400" y="6.400" width="24.200" height="24.200" rx="2" fill="#fafafa" stroke="#c4c4c4" stroke-width="1.100"/></g>
<path d="M1776.300 52 V88.400" stroke="#6b7575" stroke-width="1.200"/>
<g transform="translate(1798 53)"><path class="d" stroke-width="1.400" d="M2 0.400 H35 a1.600 1.600 0 0 1 1.600 1.600 V35 a1.600 1.600 0 0 1 -1.600 1.600 H2 a1.600 1.600 0 0 1 -1.600 -1.600 V2 a1.600 1.600 0 0 1 1.600 -1.600 Z"/><path class="d" stroke-width="1.400" d="M18.500 0.400 V5.600 C23.500 3.200 26 7.400 24.400 9.800 C22.800 12 20 12 18.500 10.600 V18.500 M0.400 18.500 H6.200 C3.800 13.400 8 11.200 10.400 12.600 C12.800 14.200 12.600 17 11.400 18.500 H18.500 M18.500 18.500 H24.600 C23 23.400 26.400 25.600 29 24.600 C31.800 23.400 31.600 20.400 30.600 18.500 H36.600 M18.500 18.500 V24.400 C14 22.400 11.400 26 12.600 28.800 C13.800 31.400 16.800 31.400 18.500 30.200 V36.600"/></g>
</svg>
<!-- ================= LEFT PANEL ================= -->
<div id="left" class="a">
  <div class="a" style="left:0;top:43px;width:506px;height:19px;background:#cecece"></div>
  <!-- printer header -->
  <div class="hdr" style="top:62px;height:36px"></div>
  <svg style="left:10px;top:70px" width="19" height="19" viewBox="0 0 20 20"><rect x="0.8" y="0.8" width="18.4" height="18.4" rx="2" fill="none" stroke="#6b7575" stroke-width="1.3"/><path d="M3.5 6.4 H16.5 M8.6 3.6 h2.8 v4.6 h-2.8 Z M3.6 15.8 H16.4" fill="none" stroke="#009688" stroke-width="1.3"/><path d="M8.2 9 h3.6 L10 12.4 Z" fill="#009688"/></svg>
  <div class="t" style="left:36px;top:69.600px">打印机</div>
  <svg style="left:475px;top:69.600px" width="22" height="22" viewBox="0 0 22 22"><path class="ic" d="M1.6 4.8 H4.2 M7.4 4.8 H20 M1.6 15.2 H12.8 M16 15.2 H20"/><rect class="ic" x="4.2" y="1.4" width="3.2" height="6.8" rx="1.6"/><rect class="ic" x="12.8" y="11.8" width="3.2" height="6.8" rx="1.6"/></svg>
  <!-- printer card -->
  <div class="card" style="left:5px;top:108px;width:496px;height:85px"></div>
  <svg style="left:11px;top:120px" width="47" height="59" viewBox="0 0 47 59">
    <defs><linearGradient id="pf" x1="0" y1="0" x2="1" y2="0"><stop offset="0" stop-color="#c9cacc"/><stop offset="1" stop-color="#b4b6b9"/></linearGradient></defs>
    <path d="M11 19.500 V5 q0 -3.600 1.400 -3.600 q1.400 0 1.400 3 V9 M15.200 20 V5 q0 -3.600 1.400 -3.600 q1.400 0 1.400 3 V9 M20 20.500 V5 q0 -3.600 1.400 -3.600 q1.400 0 1.400 3 V9 M24 20 V5 q0 -3.600 1.400 -3.600 q1.400 0 1.400 3 V9" fill="none" stroke="#1d1d2a" stroke-width="0.800" stroke-dasharray="3 0.800"/>
    <path d="M4.100 20.400 L28.700 18.700 L45 22.200 L18.300 24.600 Z" fill="#d8d9db"/>
    <path d="M6 20.400 L28 19.200 L42 22 L18.300 23.800 Z" fill="#17181a"/>
    <path d="M4.100 20.400 L18.300 24.600 L18.300 57.500 L5.400 52.300 Z" fill="url(#pf)"/>
    <path d="M18.300 24.600 L45 22.200 L45 54.400 L18.300 57.500 Z" fill="#e4e5e7"/>
    <path d="M22.100 30.800 L42.500 30.100 L42.500 54.400 L22.100 55.800 Z" fill="#77797d"/>
    <path d="M22.100 30.800 L33 30.400 L33 55 L22.100 55.800 Z" fill="#6a6c70"/>
    <path d="M22.500 50.200 L37 49.400 V50.600 L22.500 51.600 Z" fill="#cfd0d2"/>
    <path d="M37.300 24.200 L42.900 24 L42.900 28.400 L37.300 28.800 Z" fill="#26303f"/><path d="M38.200 25 L42 24.900 L42 26.600 L38.200 26.800 Z" fill="#3b78d8"/>
    <path d="M1 40.500 l2.600 -0.600 v5 l-2.600 0.600 Z" fill="#5c5e63"/>
    <path d="M6 31 l5 1.600 v2 l-5 -1.600 Z M8 45.500 l6 1.600 v1.400 l-6 -1.600 Z" fill="#a9abae"/>
  </svg>
  <svg style="left:83px;top:146px" width="16" height="10" viewBox="0 0 16 10"><path class="ic" d="M1.6 2.4 L8 6.6 L14.4 2.4"/></svg>
  <div class="t" id="pname" style="left:104px;top:140.700px;font-size:17.800px;letter-spacing:0.050px">Snapmaker U1</div>
  <svg style="left:451px;top:139px" width="21" height="21" viewBox="0 0 21 21"><path class="ic" d="M11.5 1.6 H3.4 a1.8 1.8 0 0 0 -1.8 1.8 V17.6 a1.8 1.8 0 0 0 1.8 1.8 H17.6 a1.8 1.8 0 0 0 1.8 -1.8 V9.5"/><path class="ic" d="M17.2 1.8 a1.45 1.45 0 0 1 2 2 L7.4 15.6 a1.45 1.45 0 0 1 -2 -2 Z"/></svg>
  <!-- bed type -->
  <div class="t" style="left:18px;top:219px">热床类型</div>
  <div class="combo" style="left:103px;top:211px;width:398px;height:38px"></div>
  <svg style="left:108px;top:225px" width="16" height="10" viewBox="0 0 16 10"><path class="ic" d="M1.6 2.4 L8 6.6 L14.4 2.4"/></svg>
  <div class="t gray" style="left:128px;top:220px">纹理PEI热床</div>
  <!-- nozzle card -->
  <div class="card" style="left:5px;top:269px;width:496px;height:100px;overflow:hidden">
    <div class="a" style="left:0;top:0;width:496px;height:25px;background:#f0f0f0"></div>
    <div class="a" style="left:0;top:0;width:67px;height:25px;background:#fff;border-radius:0 0 4px 0"></div>
  </div>
  <div class="t" style="left:15px;top:273.400px;font-size:17px">喷嘴 1</div>
  <div class="t" style="left:84px;top:273.400px;font-size:17px;color:#c8c8c8">喷嘴 2</div>
  <div class="t" style="left:153px;top:273.400px;font-size:17px;color:#c8c8c8">喷嘴 3</div>
  <div class="t" style="left:222px;top:273.400px;font-size:17px;color:#c8c8c8">喷嘴 4</div>
  <div class="t" style="left:22px;top:320.700px">直径</div>
  <div class="combo" style="left:74px;top:310px;width:373px;height:40px"></div>
  <svg style="left:79px;top:325px" width="16" height="10" viewBox="0 0 16 10"><path class="ic" d="M1.6 2.4 L8 6.6 L14.4 2.4"/></svg>
  <div class="t gray" style="left:99px;top:321px">0.4mm</div>
  <svg style="left:465px;top:319px" width="21" height="21" viewBox="0 0 21 21"><path class="ic" d="M11.5 1.6 H3.4 a1.8 1.8 0 0 0 -1.8 1.8 V17.6 a1.8 1.8 0 0 0 1.8 1.8 H17.6 a1.8 1.8 0 0 0 1.8 -1.8 V9.5"/><path class="ic" d="M17.2 1.8 a1.45 1.45 0 0 1 2 2 L7.4 15.6 a1.45 1.45 0 0 1 -2 -2 Z"/></svg>
  <!-- filament header -->
  <div class="hdr" style="top:374px;height:38px"></div>
  <svg style="left:10px;top:382px" width="19" height="21" viewBox="0 0 19 21"><path class="ic" d="M3.6 1.2 C0.4 4 0.4 17 3.6 19.8 M15 1.2 c2.6 0 2.6 18.600 0 18.600 c-2.600 0 -2.600 -18.600 0 -18.600 Z M11.600 1.200 C8.400 4 8.400 17 11.600 19.800"/><path d="M7.600 1.200 C4.400 4 4.400 17 7.600 19.800" fill="none" stroke="#009688" stroke-width="1.400" stroke-linecap="round"/></svg>
  <div class="t" style="left:36px;top:382px">耗材丝</div>
  <div class="a" style="left:300px;top:380px;width:72px;height:26px;border-radius:13px;background:#009688"></div>
  <div class="t" style="left:310px;top:383px;font-size:13px;color:#fff">冲刷体积</div>
  <svg style="left:384px;top:382px" width="22" height="21" viewBox="0 0 22 21"><path class="ic" d="M3.6 1.2 C0.400 4 0.400 17 3.600 19.800 M11.600 1.200 C9.600 3 8.800 6 8.600 8 M8.600 13 C8.800 15.600 9.600 18 11.600 19.800 M10 10.500 H21"/><path d="M7.600 1.200 C4.400 4 4.400 17 7.600 19.800" fill="none" stroke="#009688" stroke-width="1.400" stroke-linecap="round"/></svg>
  <svg style="left:417px;top:382px" width="22" height="21" viewBox="0 0 22 21"><path class="ic" d="M3.6 1.2 C0.400 4 0.400 17 3.600 19.800 M11.600 1.200 C9.600 3 8.800 6 8.600 8 M8.600 13 C8.800 15.600 9.600 18 11.600 19.800 M10 10.500 H21 M15.500 5 V16"/><path d="M7.600 1.200 C4.400 4 4.400 17 7.600 19.800" fill="none" stroke="#009688" stroke-width="1.400" stroke-linecap="round"/></svg>
  <svg style="left:475px;top:382px" width="22" height="22" viewBox="0 0 22 22"><path class="ic" d="M1.6 4.8 H4.2 M7.4 4.8 H20 M1.6 15.2 H12.8 M16 15.2 H20"/><rect class="ic" x="4.2" y="1.4" width="3.2" height="6.8" rx="1.6"/><rect class="ic" x="12.8" y="11.8" width="3.2" height="6.800" rx="1.600"/></svg>
  <!-- filament rows -->
  <div class="a" style="left:15px;top:438px;width:25px;height:25px;background:#ebddb9"></div>
  <div class="t" style="left:15px;top:441px;width:25px;text-align:center;font-size:16px">1</div>
  <div class="wcombo" style="left:46px;top:435px;width:166px;height:32px"></div>
  <svg style="left:51px;top:446px" width="16" height="10" viewBox="0 0 16 10"><path class="ic" d="M1.6 2.4 L8 6.600 L14.400 2.400"/></svg>
  <div class="t fil" style="left:71px;top:441px;font-size:16.500px;letter-spacing:0.100px">Snapmaker PLA ...</div>
  <svg style="left:218px;top:441px" width="20" height="20" viewBox="0 0 20 20"><circle cx="10" cy="10" r="8.600" fill="none" stroke="#262e30" stroke-width="1.400"/><circle cx="6.400" cy="10" r="1.050" fill="#262e30"/><circle cx="10" cy="10" r="1.050" fill="#262e30"/><circle cx="13.600" cy="10" r="1.050" fill="#262e30"/></svg>

  <div class="a" style="left:253px;top:438px;width:25px;height:25px;background:#b0865f"></div>
  <div class="t" style="left:253px;top:441px;width:25px;text-align:center;font-size:16px;color:#111">2</div>
  <div class="wcombo" style="left:284px;top:435px;width:181px;height:32px"></div>
  <svg style="left:289px;top:446px" width="16" height="10" viewBox="0 0 16 10"><path class="ic" d="M1.600 2.400 L8 6.600 L14.400 2.400"/></svg>
  <div class="t fil" style="left:309px;top:441px;font-size:16.5px">Snapmaker PLA S...</div>
  <svg style="left:471px;top:441px" width="20" height="20" viewBox="0 0 20 20"><circle cx="10" cy="10" r="8.600" fill="none" stroke="#262e30" stroke-width="1.400"/><circle cx="6.400" cy="10" r="1.050" fill="#262e30"/><circle cx="10" cy="10" r="1.050" fill="#262e30"/><circle cx="13.600" cy="10" r="1.050" fill="#262e30"/></svg>

  <div class="a" style="left:15px;top:476px;width:25px;height:25px;background:#000"></div>
  <div class="t" style="left:15px;top:479px;width:25px;text-align:center;font-size:16px;color:#fff">3</div>
  <div class="wcombo" style="left:46px;top:473px;width:166px;height:32px"></div>
  <svg style="left:51px;top:484px" width="16" height="10" viewBox="0 0 16 10"><path class="ic" d="M1.600 2.400 L8 6.600 L14.400 2.400"/></svg>
  <div class="t fil" style="left:71px;top:479px;font-size:16.500px;letter-spacing:0.100px">Snapmaker PLA ...</div>
  <svg style="left:218px;top:479px" width="20" height="20" viewBox="0 0 20 20"><circle cx="10" cy="10" r="8.600" fill="none" stroke="#262e30" stroke-width="1.400"/><circle cx="6.400" cy="10" r="1.050" fill="#262e30"/><circle cx="10" cy="10" r="1.050" fill="#262e30"/><circle cx="13.600" cy="10" r="1.050" fill="#262e30"/></svg>

  <!-- process header -->
  <div class="hdr" style="top:528px;height:38px"></div>
  <svg style="left:9px;top:536px" width="21" height="21" viewBox="0 0 21 21"><path class="ic" d="M10.500 1.400 L19.400 6 L10.500 10.600 L1.600 6 Z M1.800 14.400 L10.500 18.900 L19.200 14.400"/><path d="M1.800 10.200 L10.500 14.700 L19.200 10.200" fill="none" stroke="#009688" stroke-width="1.400" stroke-linecap="round" stroke-linejoin="round"/></svg>
  <div class="t" style="left:36px;top:537px">工艺</div>
  <div class="a" style="left:108px;top:534px;width:81px;height:27px;border-radius:13.5px;background:#d9d9d9"></div>
  <div class="a" style="left:108px;top:534px;width:42px;height:27px;border-radius:13.5px;background:#009688"></div>
  <div class="t" style="left:114px;top:537px;font-size:15px;color:#fff">全局</div>
  <div class="t" style="left:152px;top:537px;font-size:15px;color:#6b6b6b">对象</div>
  <div class="t" style="left:335px;top:536px;font-size:15px">高级</div>
  <div class="a" style="left:374px;top:537px;width:29px;height:20px;border-radius:6px;background:#009688"></div>
  <div class="a" style="left:385px;top:539.5px;width:15px;height:15px;border-radius:4.500px;background:#cfdedc"></div>
  <svg style="left:442px;top:536px" width="21" height="21" viewBox="0 0 21 21"><rect class="ic" x="1.400" y="1.400" width="18.200" height="18.200" rx="2"/><path d="M5 6.200 h1 M8.600 6.200 H16 M5 10.500 h1 M8.600 10.500 H16 M5 14.800 h1 M8.600 14.800 H16" fill="none" stroke="#009688" stroke-width="1.400" stroke-linecap="round"/></svg>
  <svg style="left:475px;top:536px" width="22" height="21" viewBox="0 0 22 21"><path class="ic" d="M1.800 9 V3.800 a2.200 2.200 0 0 1 4.400 0 V9 M1.800 6 H6.200 M15 12 V19.600 h2.600 a1.900 1.900 0 0 0 0 -3.800 H15 M15 15.800 h2.300 a1.900 1.900 0 0 0 0 -3.800 H15"/><path d="M12.400 4.600 H15.500 a2.400 2.400 0 0 1 2.400 2.400 V8 M14.600 2.400 L12.200 4.600 L14.600 6.800 M4.800 12 V14.600 a2.400 2.400 0 0 0 2.400 2.400 H10.400 M8.200 14.800 L10.600 17 L8.200 19.200" fill="none" stroke="#009688" stroke-width="1.400" stroke-linecap="round" stroke-linejoin="round"/></svg>
  <!-- preset row -->
  <svg style="left:15px;top:586px" width="19" height="19" viewBox="0 0 19 19"><path d="M3.200 5.400 A7.600 7.600 0 1 1 2 10.400 M2.400 1.400 L2.800 6 L7.400 5.600" fill="none" stroke="#f36b25" stroke-width="1.500" stroke-linecap="round" stroke-linejoin="round"/></svg>
  <div class="wcombo" style="left:41px;top:580px;width:384px;height:32px"></div>
  <svg style="left:46px;top:591px" width="16" height="10" viewBox="0 0 16 10"><path class="ic" d="M1.600 2.400 L8 6.600 L14.400 2.400"/></svg>
  <div class="t" id="preset" style="left:66px;top:587px;font-size:17.500px;letter-spacing:0.220px">* 0.20 Standard @Snapmaker U1 (0.4 noz...</div>
  <svg style="left:437px;top:585px" width="21" height="21" viewBox="0 0 21 21"><path class="ic" d="M3.400 1.600 H14.600 L19.400 6.400 V17.600 a1.800 1.800 0 0 1 -1.800 1.800 H3.400 a1.800 1.800 0 0 1 -1.800 -1.800 V3.400 a1.800 1.800 0 0 1 1.800 -1.800 Z M6 1.800 V5 a1 1 0 0 0 1 1 H13 a1 1 0 0 0 1 -1 V1.800 M5 19.200 V13 a1 1 0 0 1 1 -1 H15 a1 1 0 0 1 1 1 V19.200"/></svg>
  <svg style="left:470px;top:585px" width="21" height="21" viewBox="0 0 21 21"><circle class="ic" cx="8.800" cy="8.800" r="7.200"/><path class="ic" d="M14 14 L19.400 19.400 M4.200 8 A4.800 4.800 0 0 1 8 4.200"/></svg>
  <!-- tabs -->
  <div class="t" style="left:16px;top:635px;font-weight:bold">质量</div>
  <div class="t gray" style="left:80px;top:635px">强度</div>
  <div class="t gray" style="left:144px;top:635px">速度</div>
  <div class="t gray" style="left:208px;top:635px">支撑</div>
  <div class="t" style="left:273px;top:635px;color:#f0743e">材料</div>
  <div class="t gray" style="left:338px;top:635px">其他</div>
  <div class="a" style="left:13px;top:658px;width:42px;height:3px;border-radius:1.500px;background:#009688"></div>
  <div class="a" style="left:0;top:661px;width:506px;height:1px;background:#cfcfcf"></div>
  <!-- settings list -->
  <div class="a" style="left:486px;top:669px;width:20px;height:412px;background:#f0f0f0"></div>
  <div class="a" style="left:493.800px;top:690px;width:3.200px;height:61px;border-radius:1.600px;background:#8a8a8a"></div>
  <svg style="left:5px;top:673px" width="23" height="24" viewBox="0 0 23 24"><path d="M0.600 1.400 H3.800 M2.200 1.400 V19.400 M0.600 19.400 H3.800" fill="none" stroke="#009688" stroke-width="1.300"/><rect x="6" y="1.2" width="16" height="3.6" rx="1.8" fill="#d3d8d8" stroke="#7f8989" stroke-width="0.9"/><rect x="6" y="6.3" width="16" height="3.6" rx="1.8" fill="#d3d8d8" stroke="#7f8989" stroke-width="0.9"/><rect x="6" y="11.4" width="16" height="3.6" rx="1.8" fill="#d3d8d8" stroke="#7f8989" stroke-width="0.9"/><rect x="6" y="16.5" width="16" height="3.6" rx="1.8" fill="#d3d8d8" stroke="#7f8989" stroke-width="0.9"/><path d="M0.400 22.400 H22.400" stroke="#8a9393" stroke-width="1.400"/></svg>
  <div class="grp" style="top:676px">层高</div>
  <div class="a" style="left:74px;top:686px;width:406px;height:1px;background:#e9e9e9"></div>
  <svg style="left:5px;top:792px" width="23" height="23" viewBox="0 0 23 23"><path d="M0.600 0.400 V3.600 M0.600 2 H22 M22 0.400 V3.600" fill="none" stroke="#009688" stroke-width="1.300"/><rect x="0.6" y="5.2" width="21.6" height="3.6" rx="1.8" fill="#d3d8d8" stroke="#7f8989" stroke-width="0.9"/><rect x="0.6" y="9.6" width="21.6" height="3.6" rx="1.8" fill="#d3d8d8" stroke="#7f8989" stroke-width="0.9"/><rect x="0.6" y="14" width="21.6" height="3.6" rx="1.8" fill="#d3d8d8" stroke="#7f8989" stroke-width="0.9"/><path d="M0.400 20.600 H22.400" stroke="#8a9393" stroke-width="1.400"/></svg>
  <div class="grp" style="top:794px">线宽</div>
  <div class="a" style="left:74px;top:804px;width:406px;height:1px;background:#e9e9e9"></div>
  <div class="lbl" style="top:715.0px">层高</div>
  <div class="inp" style="top:709.5px"><span class="v">0.2</span><span class="u">mm</span></div>
  <div class="lbl" style="top:752.9px">首层层高</div>
  <div class="inp" style="top:747.4px"><span class="v">0.25</span><span class="u">mm</span></div>
  <div class="lbl" style="top:832.8px">缺省</div>
  <div class="inp" style="top:827.3px"><span class="v">0.42</span><span class="u">mm 或 %</span></div>
  <div class="lbl" style="top:870.8px">首层</div>
  <div class="inp" style="top:865.3px"><span class="v">0.5</span><span class="u">mm 或 %</span></div>
  <div class="lbl" style="top:908.8px">外墙</div>
  <div class="inp" style="top:903.3px"><span class="v">0.42</span><span class="u">mm 或 %</span></div>
  <div class="lbl" style="top:946.7px">内墙</div>
  <div class="inp" style="top:941.2px"><span class="v">0.45</span><span class="u">mm 或 %</span></div>
  <div class="lbl" style="top:984.7px">顶面</div>
  <div class="inp" style="top:979.2px"><span class="v">0.42</span><span class="u">mm 或 %</span></div>
  <div class="lbl" style="top:1022.6px">稀疏填充</div>
  <div class="inp" style="top:1017.1px"><span class="v">0.45</span><span class="u">mm 或 %</span></div>
  <div class="lbl" style="top:1060.6px">内部实心填充</div>
  <div class="inp" style="top:1055.1px"><span class="v">0.42</span><span class="u">mm 或 %</span></div>
  <div class="a" id="wcorner" style="left:0;top:1072px;width:9px;height:9px;background:radial-gradient(circle at 100% 0,rgba(0,0,0,0) 8px,#666 9px)"></div>
</div>
<!-- splitter -->
<div class="a" style="left:506px;top:43px;width:6px;height:1038px;background:#cacaca;border-left:1px solid #9c9c9c"></div>
<!-- ================= TOP BAR ================= -->
<div id="top" class="a">
  <svg style="left:9px;top:9px" width="26" height="26" viewBox="0 0 26 26"><path class="wi" d="M3.5 11.2 L13 3.6 L22.5 11.2 V21 a1.2 1.2 0 0 1 -1.2 1.2 H16.2 V15.4 a1 1 0 0 0 -1 -1 H10.8 a1 1 0 0 0 -1 1 V22.2 H4.7 A1.2 1.2 0 0 1 3.5 21 Z"/></svg>
  <div class="tab on" style="left:47px">
    <svg style="left:46px;top:10px" width="24" height="24" viewBox="0 0 24 24"><path class="wi" d="M12 1.8 L22.4 7 V17 L12 22.4 L1.6 17 V7 Z M1.8 7.2 L12 12.2 L22.2 7.2"/></svg>
    <div class="tt">准备</div>
  </div>
  <div class="tab" style="left:210px">
    <svg style="left:46px;top:10px" width="24" height="24" viewBox="0 0 24 24"><path class="wi" d="M12 2.2 L22 7.4 L12 12.6 L2 7.4 Z M2.4 12.2 L12 17.2 L21.6 12.2 M2.4 16.6 L12 21.6 L21.6 16.6"/></svg>
    <div class="tt">预览</div>
  </div>
  <div class="tab" style="left:373px">
    <svg style="left:46px;top:10px" width="24" height="24" viewBox="0 0 24 24"><rect class="wi" x="1.8" y="2" width="20.4" height="20" rx="2"/><path class="wi" d="M6.5 8.2 H17.5 M10.4 5.6 h3.2 v5 h-3.2 Z M12 10.8 v3 M10.6 12.4 L12 14.2 L13.4 12.4 M6 18.2 H18"/></svg>
    <div class="tt">设备</div>
  </div>
  <div class="tab" style="left:536px">
    <svg style="left:46px;top:10px" width="24" height="24" viewBox="0 0 24 24"><rect class="wi" x="1.8" y="2" width="20.4" height="20" rx="2"/><path class="wi" d="M5.4 7 h1.6 M9.6 7 H18.6 M5.4 10.6 h1.6 M9.6 10.6 H18.6 M5.4 14.2 h1.6 M9.6 14.2 H18.6 M5.4 17.8 h1.6 M9.6 17.8 H18.6"/></svg>
    <div class="tt">项目</div>
  </div>
  <!-- slice button -->
  <div class="a" style="left:1558px;top:6px;width:30px;height:30px;background:#009688;border-radius:15px 0 0 15px"></div>
  <svg style="left:1567px;top:16px" width="16" height="10" viewBox="0 0 16 10"><path class="wi" d="M2 2.5 L8 6.6 L14 2.5"/></svg>
  <div class="a" style="left:1591px;top:6px;width:120px;height:30px;background:#009688;border-radius:0 15px 15px 0"></div>
  <div class="t" style="left:1611px;top:12px;color:#fff;font-size:17.5px">切片单盘</div>
  <!-- print button -->
  <div class="a" style="left:1730px;top:6px;width:30px;height:30px;background:#009688;border-radius:15px 0 0 15px"></div>
  <svg style="left:1739px;top:16px" width="16" height="10" viewBox="0 0 16 10"><path class="wi" d="M2 2.5 L8 6.6 L14 2.5"/></svg>
  <div class="a" style="left:1763px;top:6px;width:84px;height:30px;background:#6e6e6e;border-radius:0 15px 15px 0"></div>
  <div class="t" style="left:1783px;top:12px;color:#a3a3a3;font-size:17.5px">打印</div>
</div>
</body>
</html>
